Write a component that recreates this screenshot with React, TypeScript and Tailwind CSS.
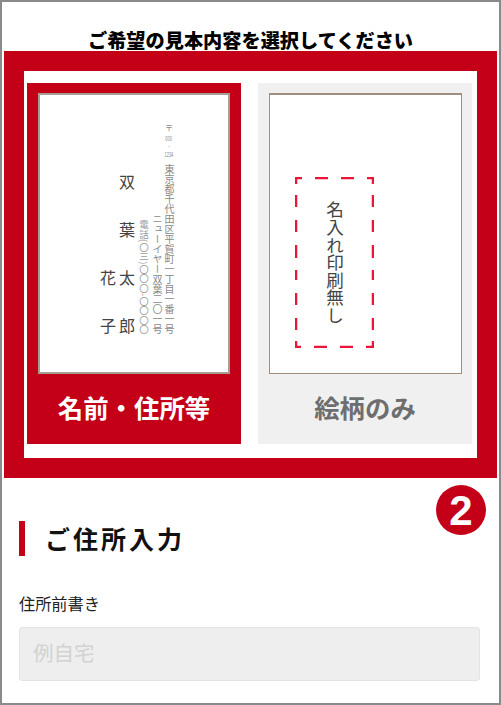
import React from "react";

const jp = "font-['Noto_Sans_CJK_JP','Noto_Sans',sans-serif]";
const latin = "font-['Liberation_Sans',sans-serif]";

function SampleCard() {
  return (
    <div className="flex h-[281px] w-[192px] flex-row-reverse items-end gap-[1px] border-2 border-[#a69e95] bg-white pb-[38px] pr-[53px] text-[#555]">
      {/* 住所の列 */}
      <div className="flex w-[12px] flex-col items-center text-[10px] leading-[10px] opacity-70">
        <span className="text-[8px] leading-[12px]">〒</span>
        <span className={`${latin} scale-x-50 whitespace-nowrap text-[8px] leading-[9.5px]`}>000</span>
        <span className={`${latin} text-[6px] leading-[7px]`}>-</span>
        <span className={`${latin} scale-x-50 whitespace-nowrap text-[8px] leading-[10px]`}>1234</span>
        <span className="mt-[4px] [writing-mode:vertical-rl]">東京都千代田区平賀町一丁目一番一号</span>
      </div>
      <div className="flex w-[12px] justify-center text-[10px] leading-[10px] opacity-70 [writing-mode:vertical-rl]">ニューイヤー双葉二〇一号</div>
      <div className="flex w-[12px] justify-center text-[9.5px] leading-[10px] opacity-60 [writing-mode:vertical-rl]">電話(〇三)〇〇〇-〇〇〇〇</div>
      <div className="flex w-[18px] flex-col items-center gap-[30px] text-[16px] leading-[18px] text-[#444]">
        <span>双</span>
        <span>葉</span>
        <span>太</span>
        <span>郎</span>
      </div>
      <div className="ml-[2px] flex w-[18px] flex-col items-center gap-[30px] text-[16px] leading-[18px] text-[#444]">
        <span>花</span>
        <span>子</span>
      </div>
    </div>
  );
}

function NoPrintCard() {
  return (
    <div className="flex h-[281px] w-[193px] items-end justify-start border border-[#a08f80] border-t-2 bg-white pb-[25px] pl-[25px]">
      <div className="relative flex h-[171px] w-[79px] items-center justify-center pl-[1px]">
        <svg className="absolute inset-0" width="79" height="171" viewBox="0 0 79 171" fill="none" stroke="#ea1539" strokeWidth="2.5">
          <path d="M1 1H79" strokeDasharray="6 13 13 13 13 13 7" />
          <path d="M0 170H79" strokeDasharray="6 13 13 13 13 13 7" />
          <path d="M1 0V171" strokeDasharray="7 11 12 13 12 13 13 12 10 13 12 13 12 11 7" />
          <path d="M78 0V171" strokeDasharray="7 11 12 13 12 13 13 12 10 13 12 13 12 11 7" />
        </svg>
        <span className="text-[17.6px] leading-[18px] text-[#444] [writing-mode:vertical-rl]">名入れ印刷無し</span>
      </div>
    </div>
  );
}

export default function App() {
  return (
    <div className={`relative h-[705px] w-[501px] overflow-hidden border-2 border-[#8a8a8a] bg-white ${jp}`}>
      <h1 className="pt-[28px] text-center text-[19.2px] font-black leading-[21px] text-black">ご希望の見本内容を選択してください</h1>

      <div className="ml-[2px] w-[493px] border-[20px] border-[#c40018] bg-white pb-[14px] pl-[3px] pr-[5px] pt-[12px]">
        <div className="flex gap-[17px]">
          <div className="flex h-[361px] w-[214px] flex-col items-center bg-[#c40018] pt-[10px]">
            <SampleCard />
            <div className="flex flex-1 items-center pb-[3px] text-[25.4px] font-bold text-white">名前・住所等</div>
          </div>
          <div className="flex h-[361px] w-[214px] flex-col items-center bg-[#f0f0f0] pt-[10px]">
            <NoPrintCard />
            <div className="flex flex-1 items-center pb-[3px] text-[25.4px] font-bold text-[#6e6e6e]">絵柄のみ</div>
          </div>
        </div>
      </div>

      <div className={`absolute left-[434px] top-[483px] flex h-[50px] w-[50px] items-center justify-center rounded-full bg-[#c40018] ${latin} text-[42px] font-bold text-white`}>2</div>

      <div className="px-[17px]">
        <h2 className="mt-[43px] flex h-[35px] items-center border-l-[6px] border-[#c40018] pl-[20px] text-[25px] font-bold tracking-[3px] text-[#111]">ご住所入力</h2>
        <label className="mt-[35px] block text-[16.2px] leading-[24px] text-[#222]">住所前書き</label>
        <input
          disabled
          placeholder="例自宅"
          className="mt-[12px] h-[54px] w-[461px] rounded-[3px] border border-[#e4e4e4] bg-[#eeeeee] px-[13px] pb-[4px] text-[20.5px] placeholder:text-[#d2d2d2]"
        />
      </div>
    </div>
  );
}
